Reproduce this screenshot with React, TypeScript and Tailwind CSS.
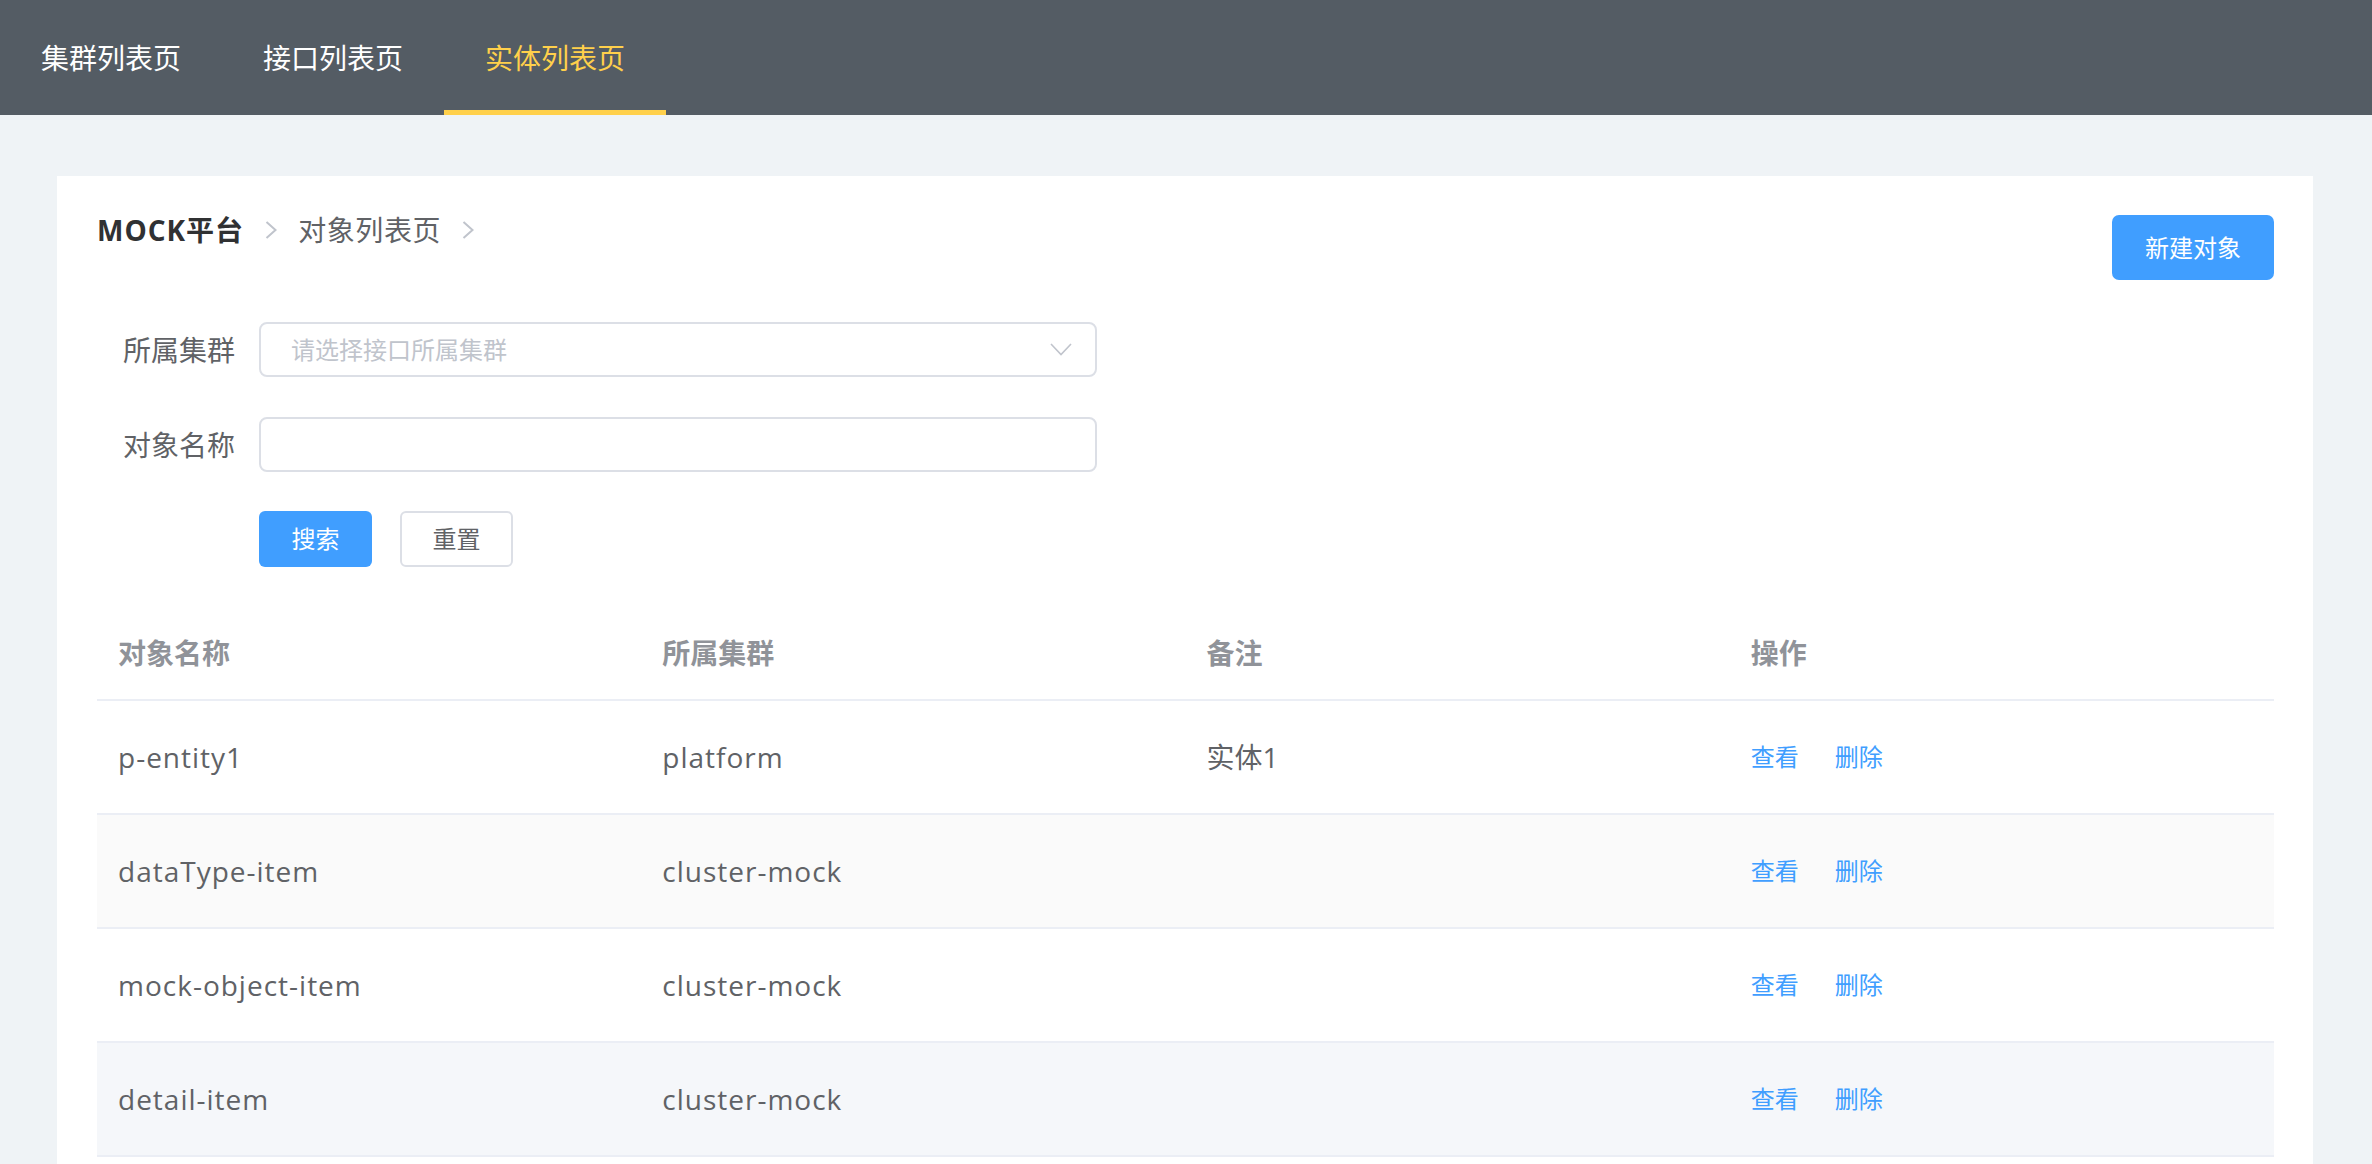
import { useState } from "react"

type EntityT = {
    name: string
    cluster: string
    remark: string
}

const tabs = ['集群列表页', '接口列表页', '实体列表页']

const rows: EntityT[] = [
    { name: 'p-entity1', cluster: 'platform', remark: '实体1' },
    { name: 'dataType-item', cluster: 'cluster-mock', remark: '' },
    { name: 'mock-object-item', cluster: 'cluster-mock', remark: '' },
    { name: 'detail-item', cluster: 'cluster-mock', remark: '' },
]

const rowBg = ['bg-white', 'bg-[#fafafa]', 'bg-white', 'bg-[#f5f7fa]']

const Chevron = () => (
    <svg width="12" height="18" viewBox="0 0 12 18" fill="none">
        <polyline points="1.5,1 10.5,9 1.5,17" stroke="#c0c4cc" strokeWidth="2" />
    </svg>
)

const App = () => {
    const [active, setActive] = useState(2)
    const [name, setName] = useState('')

    return (
        <div className="min-h-screen bg-[#eff3f6] font-['Open_Sans','Noto_Sans_CJK_SC',sans-serif]">
            <nav className="h-[115px] bg-[#545c64] flex">
                {tabs.map((tab, i) => (
                    <div
                        key={tab}
                        onClick={() => setActive(i)}
                        className={
                            i === active
                                ? "h-full px-[41px] pt-[5px] flex items-center text-[28px] text-[#ffd04b] border-b-[5px] border-[#ffd04b] cursor-pointer"
                                : "h-full px-[41px] pt-[5px] flex items-center text-[28px] text-white border-b-[5px] border-transparent cursor-pointer"
                        }
                    >
                        {tab}
                    </div>
                ))}
            </nav>

            <div className="pl-[57px] pr-[59px] pt-[61px]">
                <div className="bg-white pl-[40px] pr-[39px] pt-[39px] pb-[40px]">
                    <div className="flex justify-between items-start">
                        <div className="flex items-center gap-[21px] h-[30px] text-[28px] leading-none">
                            <span className="font-bold text-[#303133] tracking-[1px]">MOCK平台</span>
                            <Chevron />
                            <span className="text-[#606266] tracking-[0.6px]">对象列表页</span>
                            <Chevron />
                        </div>
                        <button className="h-[65px] w-[162px] rounded-[7px] bg-[#409eff] text-white text-[24px]">新建对象</button>
                    </div>

                    <form className="mt-[42px] flex flex-col gap-[40px]" onSubmit={(e) => e.preventDefault()}>
                        <div className="flex items-center">
                            <label className="w-[162px] pr-[24px] text-right text-[28px] text-[#606266]">所属集群</label>
                            <div className="w-[838px] h-[55px] border-2 border-[#dcdfe6] rounded-[8px] pl-[30px] pr-[23px] flex items-center justify-between">
                                <span className="text-[24px] text-[#c0c4cc]">请选择接口所属集群</span>
                                <svg width="22" height="13" viewBox="0 0 22 13" fill="none">
                                    <polyline points="1,1 11,11.5 21,1" stroke="#c0c4cc" strokeWidth="1.6" />
                                </svg>
                            </div>
                        </div>
                        <div className="flex items-center">
                            <label className="w-[162px] pr-[24px] text-right text-[28px] text-[#606266]">对象名称</label>
                            <input
                                className="w-[838px] h-[55px] border-2 border-[#dcdfe6] rounded-[8px] px-[30px] text-[24px] text-[#606266] outline-none"
                                value={name}
                                onChange={(e) => setName(e.target.value)}
                            />
                        </div>
                        <div className="flex items-center pl-[162px] -mt-[1px]">
                            <button type="submit" className="w-[113px] h-[56px] rounded-[6px] bg-[#409eff] text-white text-[24px]">搜索</button>
                            <button type="button" onClick={() => setName('')} className="ml-[28px] w-[113px] h-[56px] rounded-[6px] border-2 border-[#dcdfe6] bg-white text-[#606266] text-[24px]">重置</button>
                        </div>
                    </form>

                    <div className="mt-[40px]">
                        <div className="grid grid-cols-4 h-[94px] items-center border-b-2 border-[#ebeef5] text-[28px] font-bold text-[#909399]">
                            <div className="px-[21px]">对象名称</div>
                            <div className="px-[21px]">所属集群</div>
                            <div className="px-[21px]">备注</div>
                            <div className="px-[21px]">操作</div>
                        </div>
                        {rows.map((row, i) => (
                            <div key={row.name} className={"grid grid-cols-4 h-[114px] items-center border-b-2 border-[#ebeef5] text-[28px] text-[#606266] " + rowBg[i]}>
                                <div className="px-[21px] tracking-[1px]">{row.name}</div>
                                <div className="px-[21px] tracking-[1px]">{row.cluster}</div>
                                <div className="px-[21px]">{row.remark}</div>
                                <div className="px-[21px] flex gap-[36px] text-[24px] text-[#409eff]">
                                    <span className="cursor-pointer">查看</span>
                                    <span className="cursor-pointer">删除</span>
                                </div>
                            </div>
                        ))}
                    </div>
                </div>
            </div>
        </div>
    )
}

export default App
